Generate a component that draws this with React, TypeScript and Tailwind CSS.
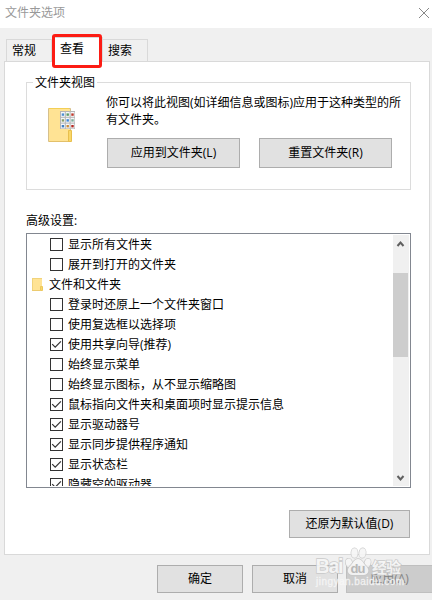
interface OptionRowProps {
  label: string;
  checked: boolean;
}

interface ButtonProps {
  label: string;
  className: string;
}

const generalOptions = [
  { label: '显示所有文件夹', checked: false },
  { label: '展开到打开的文件夹', checked: false },
];

const fileOptions = [
  { label: '登录时还原上一个文件夹窗口', checked: false },
  { label: '使用复选框以选择项', checked: false },
  { label: '使用共享向导(推荐)', checked: true },
  { label: '始终显示菜单', checked: false },
  { label: '始终显示图标，从不显示缩略图', checked: false },
  { label: '鼠标指向文件夹和桌面项时显示提示信息', checked: true },
  { label: '显示驱动器号', checked: true },
  { label: '显示同步提供程序通知', checked: true },
  { label: '显示状态栏', checked: true },
  { label: '隐藏空的驱动器', checked: true },
];

const thumbColors = [
  ['#4f8fd0', '#5d9b62', '#c0392b'],
  ['#8aa06a', '#3f87d8', '#7fae9a'],
  ['#3f7fc4', '#c98a3a', '#b5281e'],
];

const Button = ({ label, className }: ButtonProps) => (
  <button
    type="button"
    className={`flex shrink-0 items-center justify-center border border-[#adadad] bg-[#e1e1e1] ${className}`}
  >
    {label}
  </button>
);

const OptionRow = ({ label, checked }: OptionRowProps) => (
  <li className="flex h-5 shrink-0 items-center gap-[5px] pl-[23px]">
    <span className="flex size-[13px] shrink-0 border border-[#333] bg-white">
      {checked && (
        <svg width="11" height="11" viewBox="0 0 11 11" fill="none">
          <path d="M1.2 5.2 4.2 8.2 9.9 2.4" stroke="#333" strokeWidth="1.2" />
        </svg>
      )}
    </span>
    <span className="mt-0.5 whitespace-nowrap">{label}</span>
  </li>
);

const FolderIcon = () => (
  <svg width="28" height="36" viewBox="0 0 28 36">
    <path d="M.5.5h22v33H.5z" fill="#ffe394" stroke="#d6c08c" />
    <path d="M1 .5h20" stroke="#f3cf55" />
    <path d="M1 33.5h22" stroke="#e3c06a" />
    <path d="M20.5 22.5h3v11h-3z" fill="#f9d768" stroke="#e8bf4d" />
    <path d="M12 3h15v18H12z" fill="#b5b5b5" />
    {thumbColors.map((row, y) =>
      row.map((color, x) => (
        <g key={`${x}-${y}`}>
          <rect x={13 + x * 4.8} y={4 + y * 5.8} width="3.8" height="4.8" fill="#f5f8fb" />
          <rect x={13.7 + x * 4.8} y={5.4 + y * 5.8} width="2.4" height="2.4" fill={color} />
        </g>
      ))
    )}
  </svg>
);

const SmallFolderIcon = () => (
  <svg width="11" height="13" viewBox="0 0 11 13">
    <path d="M0 0h10v13H0z" fill="#ffe394" />
    <path d="M.5 0v13M0 .5h10" stroke="#f1d37b" />
    <path d="M8.5 8.5h2v4h-2z" fill="#f9d768" stroke="#edc85c" />
    <path d="M0 12.5h9" stroke="#eccb70" />
  </svg>
);

const Watermark = () => (
  <div className="pointer-events-none absolute top-[545px] left-[315px] h-[45px] w-[92px]">
    <svg
      width="92"
      height="45"
      viewBox="0 0 92 45"
      className="[font-family:'Liberation_Sans','Noto_Sans_CJK_SC',sans-serif]"
    >
      <g fill="#f6f6f6" stroke="#c6c6c6" strokeWidth="1.4" paintOrder="stroke" opacity="0.9">
        <text x="0.5" y="28" fontSize="20" fontWeight="700" textLength="28">
          Bai
        </text>
        <ellipse cx="34" cy="18" rx="3.2" ry="4.4" transform="rotate(-15 34 18)" />
        <ellipse cx="39.5" cy="8" rx="3.2" ry="4.8" />
        <ellipse cx="47.5" cy="8" rx="3.2" ry="4.8" transform="rotate(8 47.5 8)" />
        <ellipse cx="52.5" cy="18" rx="3" ry="4.4" transform="rotate(18 52.5 18)" />
        <path d="M43 14c4 0 5 4 7.5 6.500 5 4 3 9.500-2 9.500h-11c-5 0-6.500-5.500-2-9.500C38.500 18 39 14 43 14z" />
        <text x="57" y="28" fontSize="15" fontWeight="700" textLength="29">
          经验
        </text>
      </g>
      <text x="35.5" y="28" fontSize="13" fontWeight="700" fill="#b8b8b8" textLength="15">
        du
      </text>
      <text
        x="1"
        y="40"
        fontSize="10"
        fill="#f8f8f8"
        stroke="#f8f8f8"
        strokeWidth="0.3"
        opacity="0.85"
        textLength="88"
      >
        jingyan.baidu.com
      </text>
    </svg>
  </div>
);

const TitleBar = () => (
  <header className="flex h-7 shrink-0 items-center justify-between bg-white pr-[3px] pb-[3px] pl-[5px] text-[#999]">
    <h1>文件夹选项</h1>
    <svg width="10" height="10" viewBox="0 0 10 10" stroke="#888" strokeWidth="1">
      <path d="M0 0 10 10M10 0 0 10" />
    </svg>
  </header>
);

const TabBar = () => (
  <nav className="relative z-10 -mb-px flex h-[25px] shrink-0 items-end pl-[6px]">
    <div className="flex h-[23px] w-[46px] items-center border border-[#d9d9d9] pl-[5px]">常规</div>
    <div className="relative flex h-[25px] w-[51px] items-center border border-b-0 border-[#d9d9d9] bg-white pb-[2px] pl-[7px]">
      查看
      <span className="absolute -top-[4px] -left-[1px] h-[34px] w-[50px] rounded-[3px] border-3 border-[#fc1c14]" />
    </div>
    <div className="flex h-[23px] w-[45px] items-center border border-l-0 border-[#d9d9d9] pl-[5px]">搜索</div>
  </nav>
);

const FolderViews = () => (
  <section className="relative mt-[20px] h-[108px] shrink-0 border border-[#dcdcdc]">
    <h2 className="absolute -top-[9px] left-[6px] bg-white px-[2px]">文件夹视图</h2>
    <div className="flex pt-[11px] pl-[21px]">
      <div className="w-[58px] shrink-0 pt-[14px]">
        <FolderIcon />
      </div>
      <div>
        <p className="w-[300px] leading-[17px]">
          你可以将此视图(如详细信息或图标)应用于这种类型的所
          <br />
          有文件夹。
        </p>
        <div className="mt-[10px] ml-[1px] flex gap-[19px]">
          <Button label="应用到文件夹(L)" className="h-[30px] w-[133px]" />
          <Button label="重置文件夹(R)" className="h-[30px] w-[133px]" />
        </div>
      </div>
    </div>
  </section>
);

const ScrollBar = () => (
  <div className="mt-px mr-px flex h-[251px] w-4 shrink-0 flex-col items-center justify-between bg-[#f0f0f0]">
    <svg width="16" height="38" viewBox="0 0 16 38" fill="none">
      <path d="M4.5 11 7.5 7.5l3 3.5" stroke="#606060" strokeWidth="2" />
    </svg>
    <div className="h-[84px] w-[15px] self-start bg-[#cdcdcd]" />
    <svg width="16" height="129" viewBox="0 0 16 129" fill="none">
      <path d="M4.5 119l3 3.5 3-3.5" stroke="#606060" strokeWidth="2" />
    </svg>
  </div>
);

const AdvancedSettings = () => (
  <section className="mt-[21px] flex flex-col">
    <h2 className="h-[18px] pt-px">高级设置:</h2>
    <div className="mt-1 flex h-[255px] justify-between overflow-hidden border border-[#828790]">
      <ul className="flex h-[252px] flex-col overflow-hidden">
        {generalOptions.map((option) => (
          <OptionRow key={option.label} {...option} />
        ))}
        <li className="flex h-5 shrink-0 items-center gap-[6px] pl-[5px]">
          <SmallFolderIcon />
          <span className="mt-0.5">文件和文件夹</span>
        </li>
        {fileOptions.map((option) => (
          <OptionRow key={option.label} {...option} />
        ))}
      </ul>
      <ScrollBar />
    </div>
  </section>
);

const App = () => {
  return (
    <div className="relative flex h-[600px] w-[432px] flex-col overflow-hidden bg-[#f0f0f0] text-[12px] leading-[18px] text-black [font-family:'Open_Sans','Noto_Sans_CJK_SC',sans-serif]">
      <TitleBar />
      <div className="flex flex-col pt-[9px]">
        <TabBar />
        <main className="ml-1 flex h-[494px] w-[426px] flex-col border border-[#d9d9d9] bg-white pr-[18px] pl-[21px]">
          <FolderViews />
          <AdvancedSettings />
          <Button label="还原为默认值(D)" className="mt-[22px] mr-px h-7 w-[121px] self-end" />
        </main>
      </div>
      <footer className="mt-[10px] flex pl-[157px]">
        <Button label="确定" className="h-7 w-[86px]" />
        <Button label="取消" className="ml-[9px] h-7 w-[86px]" />
        <button
          type="button"
          disabled
          className="ml-2 flex h-7 w-[87px] shrink-0 items-center justify-center border border-[#bfbfbf] bg-[#cccccc] text-[#838383]"
        >
          应用(A)
        </button>
      </footer>
      <Watermark />
    </div>
  );
};

export default App;
